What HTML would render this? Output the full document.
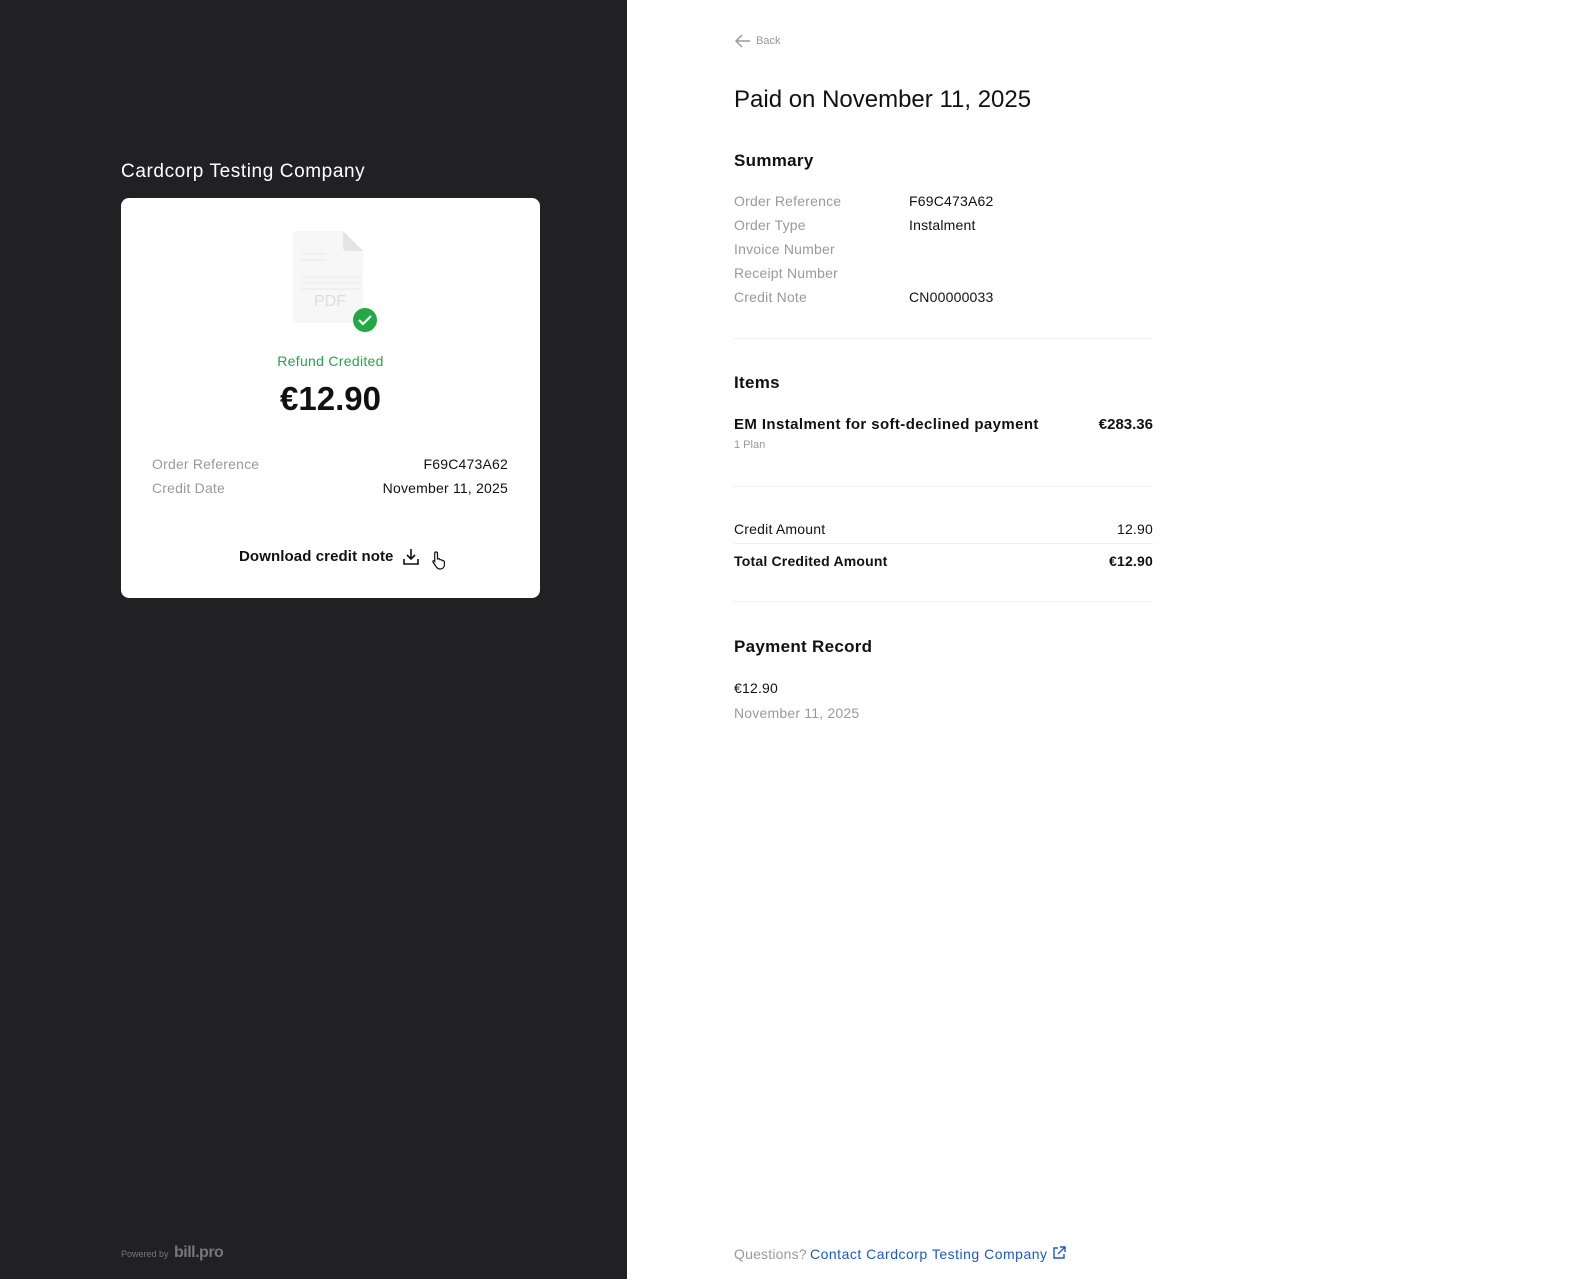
<!DOCTYPE html>
<html><head><meta charset="utf-8"><style>
*{margin:0;padding:0;box-sizing:border-box}
body{width:1575px;height:1279px;font-family:"Liberation Sans",sans-serif;background:#fff;position:relative;overflow:hidden;color:#111}
.left{position:absolute;left:0;top:0;width:627px;height:1279px;background:#212123}
.abs{position:absolute;white-space:nowrap}
.card{position:absolute;left:121px;top:198px;width:419px;height:400px;background:#fff;border-radius:8px}
.lbl{font-size:14px;color:#9a9a9a;letter-spacing:0.2px}
.val{font-size:14px;color:#111;letter-spacing:0.2px}
.hr{position:absolute;left:734px;width:419px;height:1px;background:#eee}
</style></head><body>
<div class="left">
<div class="abs" style="left:121px;top:161px;font-size:19px;color:#fff;letter-spacing:0.6px">Cardcorp Testing Company</div>
<div class="card">
 <svg class="abs" style="left:170px;top:31px" width="90" height="104" viewBox="0 0 90 104">
  <path d="M6 2h46l20 20v68a4 4 0 0 1-4 4H6a4 4 0 0 1-4-4V6a4 4 0 0 1 4-4z" fill="#f7f7f7"/>
  <path d="M52 2v16a4 4 0 0 0 4 4h16z" fill="#e4e4e4"/>
  <path d="M10 25h25M10 31h25M10 48h60M10 54h60M10 60h60" stroke="#eee" stroke-width="1.5"/>
  <text x="39" y="77" font-size="16" fill="#ddd" text-anchor="middle" font-family="Liberation Sans">PDF</text>
  <circle cx="74" cy="91" r="12" fill="#22a845"/>
  <path d="M68 91l4 4 8-8" stroke="#fff" stroke-width="2.2" fill="none"/>
 </svg>
 <div class="abs" style="left:0;width:419px;text-align:center;top:155px;font-size:14px;color:#22a845;letter-spacing:0.3px">Refund Credited</div>
 <div class="abs" style="left:0;width:419px;text-align:center;top:182px;font-size:33px;font-weight:bold">€12.90</div>
 <div class="abs lbl" style="left:31px;top:258px">Order Reference</div>
 <div class="abs val" style="right:32px;top:258px">F69C473A62</div>
 <div class="abs lbl" style="left:31px;top:282px">Credit Date</div>
 <div class="abs val" style="right:32px;top:282px">November 11, 2025</div>
 <div class="abs" style="left:118px;top:350px;font-size:15px;font-weight:bold;letter-spacing:0.1px">Download credit note</div>
 <svg class="abs" style="left:281px;top:350px" width="18" height="18" viewBox="0 0 18 18" fill="none" stroke="#111" stroke-width="1.6"><path d="M9 1v10M5 7l4 4 4-4M2 11v5h14v-5"/></svg>
 <svg class="abs" style="left:310px;top:352px" width="18" height="20" viewBox="0 0 18 20" fill="#fff" stroke="#111" stroke-width="1.2"><path d="M5 2c1 0 1.5.6 1.5 1.5V9l1-.3c.8 0 1.3.5 1.3 1l1 0c.8 0 1.3.5 1.3 1l1 0c.8 0 1.3.6 1.3 1.2V15c0 2-1.5 4-4 4H9c-2 0-3-1-4-2.5L2 12c-.5-.8.2-1.6 1-1.2l.7.6V3.5C3.7 2.6 4.2 2 5 2z"/></svg>
</div>
<div class="abs" style="left:121px;top:1249px;font-size:9px;color:#777">Powered by</div>
<div class="abs" style="left:174px;top:1244px;font-size:16px;font-weight:bold;color:#777;letter-spacing:-0.5px">bill.pro</div>
</div>

<svg class="abs" style="left:735px;top:34px" width="16" height="14" viewBox="0 0 16 14" fill="none" stroke="#999" stroke-width="1.5"><path d="M15 7H2M7 1L1 7l6 6"/></svg>
<div class="abs" style="left:756px;top:35px;font-size:11px;color:#999">Back</div>
<div class="abs" style="left:734px;top:86px;font-size:24px;color:#111">Paid on November 11, 2025</div>
<div class="abs" style="left:734px;top:151px;font-size:17px;font-weight:bold;letter-spacing:0.3px">Summary</div>
<div class="abs lbl" style="left:734px;top:193px">Order Reference</div><div class="abs val" style="left:909px;top:193px">F69C473A62</div>
<div class="abs lbl" style="left:734px;top:217px">Order Type</div><div class="abs val" style="left:909px;top:217px">Instalment</div>
<div class="abs lbl" style="left:734px;top:241px">Invoice Number</div>
<div class="abs lbl" style="left:734px;top:265px">Receipt Number</div>
<div class="abs lbl" style="left:734px;top:289px">Credit Note</div><div class="abs val" style="left:909px;top:289px">CN00000033</div>
<div class="hr" style="top:338px"></div>
<div class="abs" style="left:734px;top:373px;font-size:17px;font-weight:bold;letter-spacing:0.3px">Items</div>
<div class="abs" style="left:734px;top:416px;font-size:15px;font-weight:bold;letter-spacing:0.4px">EM Instalment for soft-declined payment</div>
<div class="abs" style="right:422px;top:416px;font-size:15px;font-weight:bold">€283.36</div>
<div class="abs" style="left:734px;top:439px;font-size:11px;color:#999">1 Plan</div>
<div class="hr" style="top:486px"></div>
<div class="abs val" style="left:734px;top:521px">Credit Amount</div><div class="abs val" style="right:422px;top:521px">12.90</div>
<div class="hr" style="top:543px"></div>
<div class="abs val" style="left:734px;top:553px;font-weight:bold">Total Credited Amount</div><div class="abs val" style="right:422px;top:553px;font-weight:bold">€12.90</div>
<div class="hr" style="top:601px"></div>
<div class="abs" style="left:734px;top:637px;font-size:17px;font-weight:bold;letter-spacing:0.3px">Payment Record</div>
<div class="abs val" style="left:734px;top:680px">€12.90</div>
<div class="abs lbl" style="left:734px;top:705px">November 11, 2025</div>
<div class="abs" style="left:734px;top:1246px;font-size:14px;color:#999;letter-spacing:0.2px">Questions?</div>
<div class="abs" style="left:810px;top:1246px;font-size:14px;color:#1a56db;letter-spacing:0.5px">Contact Cardcorp Testing Company</div>
<svg class="abs" style="left:1052px;top:1246px" width="14" height="14" viewBox="0 0 14 14" fill="none" stroke="#1a56db" stroke-width="1.4"><path d="M6 2H2v10h10V8M8 1h5v5M13 1L6 8"/></svg>
</body></html>
